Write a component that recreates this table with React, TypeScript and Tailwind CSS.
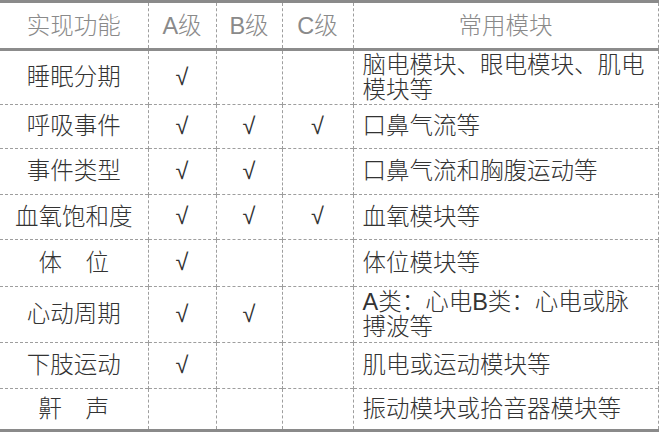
const rows: { name: string; a: boolean; b: boolean; c: boolean; mod: string[]; h: string }[] = [
  { name: '睡眠分期', a: true, b: false, c: false, mod: ['脑电模块、眼电模块、肌电', '模块等'], h: 'h-[55px]' },
  { name: '呼吸事件', a: true, b: true, c: true, mod: ['口鼻气流等'], h: 'h-[44px]' },
  { name: '事件类型', a: true, b: true, c: false, mod: ['口鼻气流和胸腹运动等'], h: 'h-[46px]' },
  { name: '血氧饱和度', a: true, b: true, c: true, mod: ['血氧模块等'], h: 'h-[45px]' },
  { name: '体\u3000位', a: true, b: false, c: false, mod: ['体位模块等'], h: 'h-[47px]' },
  { name: '心动周期', a: true, b: true, c: false, mod: ['A类：心电B类：心电或脉', '搏波等'], h: 'h-[56px]' },
  { name: '下肢运动', a: true, b: false, c: false, mod: ['肌电或运动模块等'], h: 'h-[46px]' },
  { name: '鼾\u3000声', a: false, b: false, c: false, mod: ['振动模块或拾音器模块等'], h: 'h-[42px]' },
]

const dash = 'border-l border-dashed border-[#9e9e9e]'

export default function App() {
  return (
    <div className="min-h-screen bg-white font-['Liberation_Sans','Noto_Sans_CJK_SC',sans-serif] text-[23.5px] font-light">
      <table className="w-[658px] table-fixed border-collapse border-y-[3px] border-solid border-y-[#8a8a8a]">
        <colgroup>
          <col className="w-[148px]" />
          <col className="w-[68px]" />
          <col className="w-[66px]" />
          <col className="w-[71px]" />
          <col className="w-[305px]" />
        </colgroup>
        <thead>
          <tr className="h-[48px] border-b-[3px] border-solid border-b-[#8c8c8c] text-[#8a8a8a]">
            <th className="px-0 pt-[3px] pb-0 text-center font-light">实现功能</th>
            <th className={`${dash} px-0 pt-[3px] pb-0 text-center font-light`}>A级</th>
            <th className={`${dash} px-0 pt-[3px] pb-0 text-center font-light`}>B级</th>
            <th className={`${dash} px-0 pt-[3px] pb-0 text-center font-light`}>C级</th>
            <th className={`${dash} border-r border-r-[#9e9e9e] px-0 pt-[3px] pb-0 text-center font-light`}>常用模块</th>
          </tr>
        </thead>
        <tbody className="text-[#333333]">
          {rows.map((r) => (
            <tr key={r.name} className={`${r.h} border-b border-dashed border-b-[#9e9e9e]`}>
              <td className="p-0 text-center leading-[25px]">{r.name}</td>
              <td className={`${dash} p-0 text-center`}>{r.a ? '√' : ''}</td>
              <td className={`${dash} p-0 text-center`}>{r.b ? '√' : ''}</td>
              <td className={`${dash} p-0 text-center`}>{r.c ? '√' : ''}</td>
              <td className={`${dash} border-r border-r-[#9e9e9e] py-0 pl-[9px] pr-[6px] leading-[25px]`}>
                {r.mod.map((line, i) => (
                  <div key={i} className="whitespace-nowrap">{line}</div>
                ))}
              </td>
            </tr>
          ))}
        </tbody>
      </table>
    </div>
  )
}
